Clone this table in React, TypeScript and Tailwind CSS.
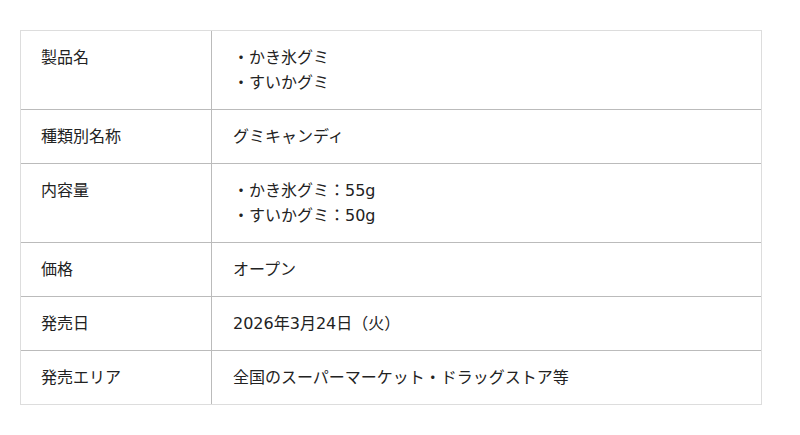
import React from "react";

const rows: { label: string; lines: string[] }[] = [
  { label: "製品名", lines: ["・かき氷グミ", "・すいかグミ"] },
  { label: "種類別名称", lines: ["グミキャンディ"] },
  { label: "内容量", lines: ["・かき氷グミ：55g", "・すいかグミ：50g"] },
  { label: "価格", lines: ["オープン"] },
  { label: "発売日", lines: ["2026年3月24日（火）"] },
  { label: "発売エリア", lines: ["全国のスーパーマーケット・ドラッグストア等"] },
];

export default function App() {
  return (
    <div
      className="w-[800px] h-[435px] bg-white pl-[20px] pt-[30px] text-[#222] text-[16px] leading-[25px]"
      style={{ fontFamily: '"DejaVu Sans", "Noto Sans CJK JP", sans-serif' }}
    >
      <div className="w-[742px] border border-[#dddddd]">
        {rows.map((r, i) => (
          <div
            key={r.label}
            className={i === 0 ? "flex" : "flex border-t border-[#bbbbbb]"}
          >
            <div className="w-[191px] shrink-0 border-r border-[#bbbbbb] pl-[20px] py-[14px]">
              {r.label}
            </div>
            <div className="flex-1 pl-[21px] py-[14px]">
              {r.lines.map((l) => (
                <div key={l}>{l}</div>
              ))}
            </div>
          </div>
        ))}
      </div>
    </div>
  );
}
